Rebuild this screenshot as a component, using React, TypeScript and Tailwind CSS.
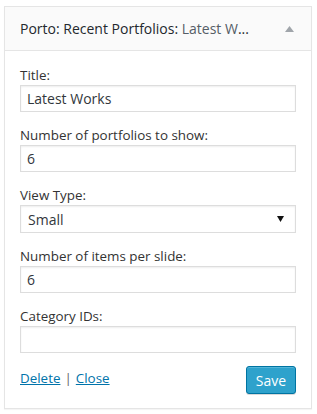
import React from 'react';

const font = { fontFamily: '"Open Sans", "Noto Sans", sans-serif' };

function Field({ label, value, select }: { label: string; value?: string; select?: boolean }) {
  return (
    <div className="flex flex-col mb-[14px]">
      <label className="text-[13.4px] leading-[18px] text-[#333] mb-px">{label}</label>
      {select ? (
        <div className="h-[28px] border border-[#ddd] bg-white flex items-center justify-between pl-[7px] pr-[11px] text-[14px] text-[#32373c] shadow-[inset_0_1px_2px_rgba(0,0,0,0.07)]">
          <span>{value}</span>
          <svg width="7" height="6" viewBox="0 0 7 6">
            <path d="M0 0 L7 0 L3.5 6 Z" fill="#111" />
          </svg>
        </div>
      ) : (
        <div className="h-[27px] border border-[#ddd] bg-white flex items-center px-[6px] text-[14px] text-[#32373c] shadow-[inset_0_1px_2px_rgba(0,0,0,0.07)]">
          {value}
        </div>
      )}
    </div>
  );
}

export default function App() {
  return (
    <div className="w-[317px] h-[414px] bg-white pt-[6px] pl-[4px]" style={font}>
      <div className="w-[308px] border border-[#e5e5e5] shadow-[0_1px_1px_rgba(0,0,0,0.04)]">
        {/* header */}
        <div className="h-[44px] bg-[#fafafa] border-b border-[#e5e5e5] flex items-center justify-between pl-[15px] pr-[17px]">
          <h3 className="text-[14px] text-[#23282d] font-normal whitespace-nowrap">
            Porto: Recent Portfolios: <span className="text-[#555d66]">Latest W</span>...
          </h3>
          <svg width="9" height="6" viewBox="0 0 9 6">
            <path d="M0 6 L4.5 0 L9 6 Z" fill="#a0a5aa" />
          </svg>
        </div>

        {/* body */}
        <div className="px-[15px] pt-[15px] pb-[14px]">
          <Field label="Title:" value="Latest Works" />
          <Field label="Number of portfolios to show:" value="6" />
          <Field label="View Type:" value="Small" select />
          <Field label="Number of items per slide:" value="6" />
          <Field label="Category IDs:" value="" />

          <div className="flex items-start justify-between -mt-px">
            <div className="text-[13.4px] text-[#0073aa] pt-[2px]">
              <a className="underline">Delete</a>
              <span className="text-[#666] mx-[4px]">|</span>
              <a className="underline">Close</a>
            </div>
            <button className="h-[28px] w-[50px] rounded-[3px] bg-[#2ea2cc] border border-[#0074a2] text-white text-[14px] shadow-[inset_0_1px_0_rgba(120,200,230,0.5),0_1px_0_rgba(0,0,0,0.15)]">
              Save
            </button>
          </div>
        </div>
      </div>
    </div>
  );
}
